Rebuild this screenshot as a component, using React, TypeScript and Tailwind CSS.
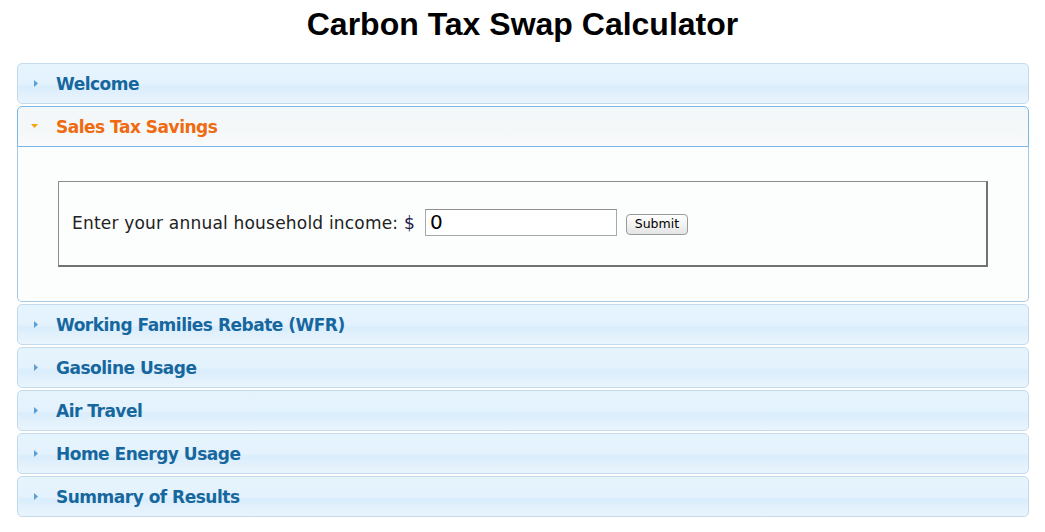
import React from "react";

const headerBase =
  "flex items-center h-[41px] pl-[38px] pt-[2px] border text-[17px] tracking-[-0.5px] font-bold";

function RightTri() {
  return (
    <svg width="4" height="7" viewBox="0 0 4 7" className="absolute left-[16px] top-[16px]">
      <path d="M0 0 L4 3.5 L0 7 Z" fill="#5a9fd6" />
    </svg>
  );
}

function DownTri() {
  return (
    <svg width="7" height="4" viewBox="0 0 7 4" className="absolute left-[13px] top-[17px]">
      <path d="M0 0 L7 0 L3.5 4 Z" fill="#f5a30c" />
    </svg>
  );
}

function Header({ title }: { title: string }) {
  return (
    <div
      className={
        headerBase +
        " relative rounded-[5px] border-[#c5dbec] text-[#17679f] bg-[linear-gradient(to_bottom,#e6f4fd_0%,#e3f2fd_50%,#d9edfc_58%,#e1f0fc_75%,#e9f5fd_100%)]"
      }
    >
      <RightTri />
      <span>{title}</span>
    </div>
  );
}

export default function App() {
  const font = { fontFamily: '"DejaVu Sans", "Noto Sans", sans-serif' };
  return (
    <div className="bg-white w-[1045px] h-[532px] overflow-hidden" style={font}>
      <h1
        className="pt-[6px] text-center text-[32px] leading-[37px] font-bold text-black"
        style={{ fontFamily: '"Liberation Sans", Arial, sans-serif' }}
      >
        Carbon Tax Swap Calculator
      </h1>
      <div className="mt-[20px] pl-[17px] pr-[16px] flex flex-col gap-[2px]">
        <Header title="Welcome" />
        <div className="flex flex-col">
          <div
            className={
              headerBase +
              " relative rounded-t-[5px] border-[#79b7e7] text-[#f06a10] bg-[linear-gradient(to_bottom,#f2f7f9_0%,#f5f8f9_60%,#f8fafb_100%)]"
            }
          >
            <DownTri />
            <span>Sales Tax Savings</span>
          </div>
          <div className="border-x border-b border-[#a6c9e2] rounded-b-[5px] bg-[#fcfdfd] px-[40px] pt-[34px] pb-[34px]">
            <div className="h-[86px] flex items-center pl-[13px] border-l border-t border-[#8c8c8c] border-r-2 border-b-2 border-r-[#727272] border-b-[#727272]">
              <span className="text-[17px] tracking-[0.2px] text-[#222] leading-none">
                Enter your annual household income: <span className="text-[#1a1a4a]">$</span>
              </span>
              <input
                defaultValue="0"
                className="ml-[10px] -mt-[3px] w-[192px] h-[27px] border border-[#a9a9a9] border-t-[#8f8f8f] bg-white px-[4px] text-[20px] text-black outline-none"
                style={{ fontFamily: '"DejaVu Sans", sans-serif' }}
              />
              <button
                className="ml-[9px] mt-[1px] w-[62px] h-[21px] rounded-[4px] border border-[#9a9a9a] bg-[linear-gradient(to_bottom,#ffffff_0%,#f2f2f2_50%,#e4e4e4_100%)] text-[12.5px] text-black leading-none"
                style={{ fontFamily: '"DejaVu Sans", sans-serif' }}
              >
                Submit
              </button>
            </div>
          </div>
        </div>
        <Header title="Working Families Rebate (WFR)" />
        <Header title="Gasoline Usage" />
        <Header title="Air Travel" />
        <Header title="Home Energy Usage" />
        <Header title="Summary of Results" />
      </div>
    </div>
  );
}
